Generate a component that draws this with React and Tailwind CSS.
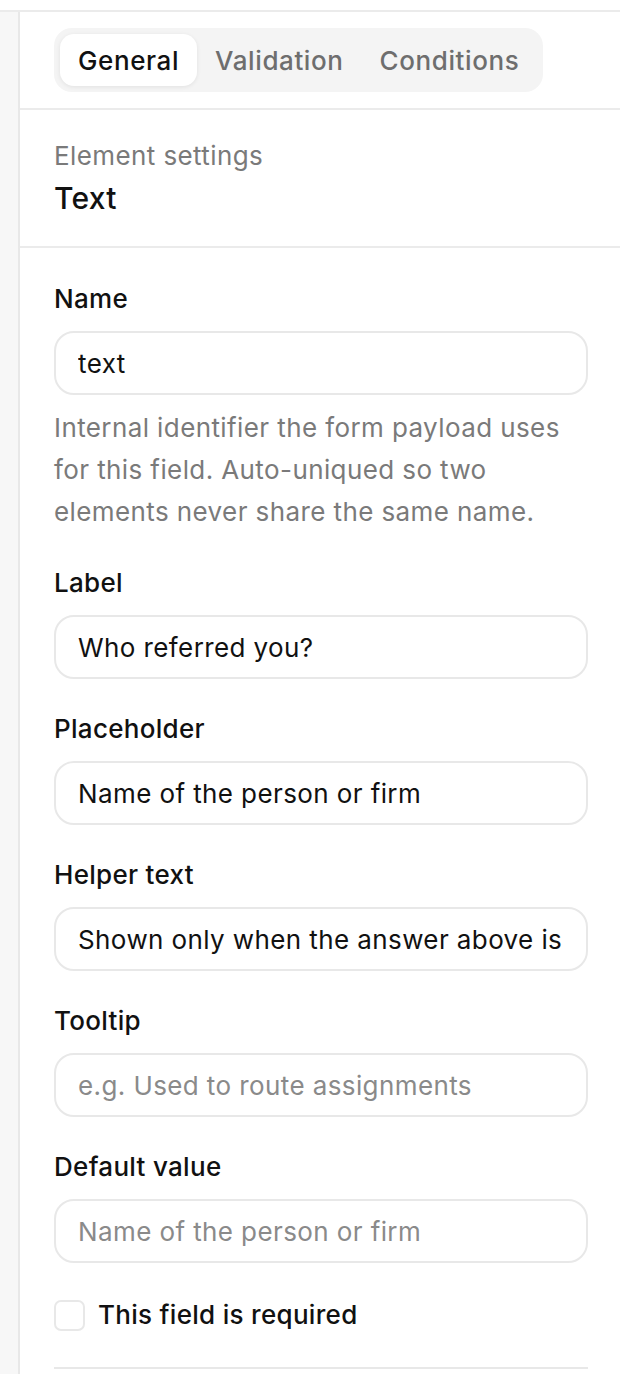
import { useState } from "react";

const font = { fontFamily: "Inter, 'Noto Sans', sans-serif" };

function Field({ label, value, placeholder, help }) {
  return (
    <div className="flex flex-col">
      <label className="text-[26px] leading-[36px] font-medium tracking-[0.3px] text-[#111]">{label}</label>
      <input
        className="mt-[14px] h-[64px] w-full rounded-[20px] border-2 border-[#e8e8e8] bg-white px-[22px] text-[26px] tracking-[0.4px] text-[#111] placeholder:text-[#8a8a8a] focus:outline-none"
        defaultValue={value}
        placeholder={placeholder}
      />
      {help && (
        <p className="mt-[12px] text-[26px] leading-[42px] tracking-[0.4px] text-[#7a7a7a]">{help}</p>
      )}
    </div>
  );
}

export default function App() {
  const [tab, setTab] = useState("General");
  const [required, setRequired] = useState(false);
  const tabs = ["General", "Validation", "Conditions"];

  return (
    <div style={font} className="flex min-h-[1374px] w-[620px] flex-col bg-white">
      <div className="h-[10px] shrink-0" />
      <div className="flex flex-1 border-t-2 border-[#ebebeb]">
        <div className="w-[20px] shrink-0 border-r-2 border-[#e8e8e8] bg-[#f7f7f7]" />
        <div className="flex-1">
          <div className="border-b-2 border-[#ebebeb] pl-[34px] pr-[32px] pt-[16px] pb-[16px]">
            <div className="inline-flex rounded-[18px] bg-[#f4f4f4] p-[6px]">
              {tabs.map((t) => (
                <button
                  key={t}
                  onClick={() => setTab(t)}
                  className={
                    tab === t
                      ? "h-[52px] rounded-[14px] bg-white px-[18px] text-[26px] font-medium tracking-[0.6px] text-[#111] shadow-[0_1px_4px_rgba(0,0,0,0.08)]"
                      : "h-[52px] rounded-[14px] px-[18px] text-[26px] font-medium tracking-[0.6px] text-[#6e6e6e]"
                  }
                >
                  {t}
                </button>
              ))}
            </div>
          </div>

          <div className="border-b-2 border-[#ebebeb] pl-[34px] pr-[32px] pt-[28px] pb-[28px]">
            <p className="text-[26px] leading-[36px] tracking-[0.4px] text-[#7a7a7a]">Element settings</p>
            <p className="mt-[4px] text-[30px] leading-[40px] font-medium tracking-[0.3px] text-[#111]">Text</p>
          </div>

          <div className="flex flex-col gap-[32px] pl-[34px] pr-[32px] pt-[33px]">
            <Field
              label="Name"
              value="text"
              help="Internal identifier the form payload uses for this field. Auto-uniqued so two elements never share the same name."
            />
            <Field label="Label" value="Who referred you?" />
            <Field label="Placeholder" value="Name of the person or firm" />
            <Field label="Helper text" value="Shown only when the answer above is “Referral”." />
            <Field label="Tooltip" placeholder="e.g. Used to route assignments" />
            <Field label="Default value" placeholder="Name of the person or firm" />
          </div>

          <div className="pl-[34px] pr-[32px]">
            <label className="mt-[34px] flex items-center gap-[13px]">
              <button
                onClick={() => setRequired(!required)}
                className={
                  required
                    ? "h-[31px] w-[31px] shrink-0 rounded-[7px] border-2 border-[#111] bg-[#111]"
                    : "h-[31px] w-[31px] shrink-0 rounded-[7px] border-2 border-[#e8e8e8] bg-white"
                }
              />
              <span className="text-[26px] leading-[36px] font-medium tracking-[0.3px] text-[#111]">
                This field is required
              </span>
            </label>
            <div className="mt-[34px] border-t-2 border-[#e8e8e8]" />
          </div>
        </div>
      </div>
    </div>
  );
}
